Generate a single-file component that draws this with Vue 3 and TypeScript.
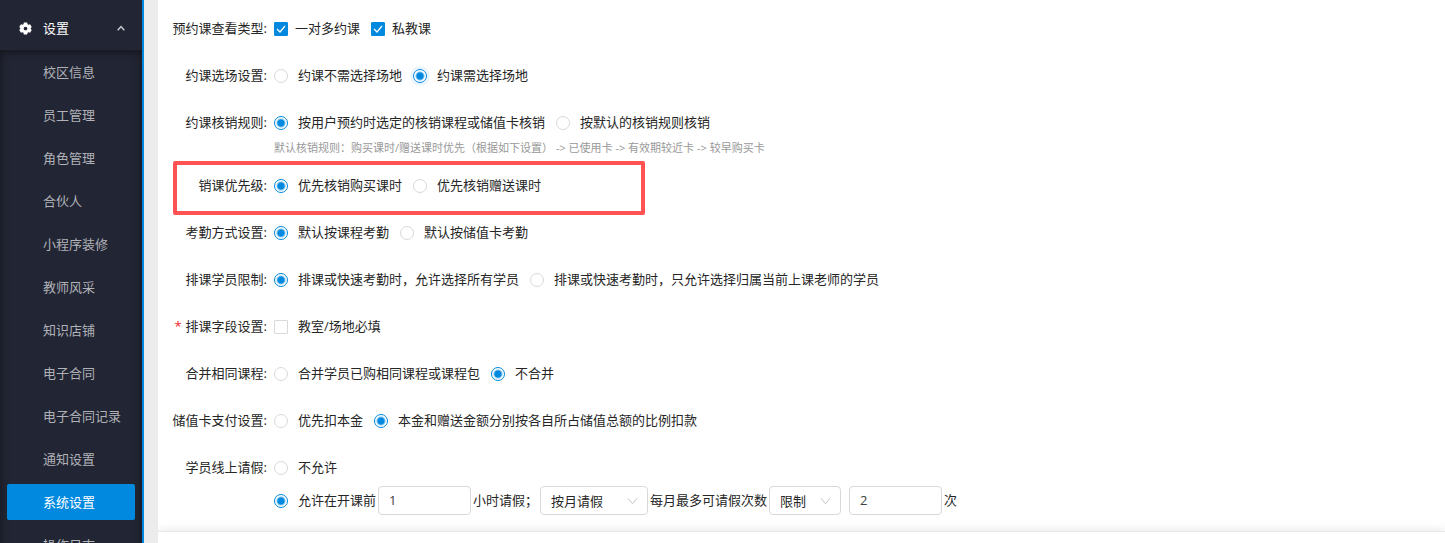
<script setup lang="ts">
import { onMounted, reactive, ref } from 'vue'

interface Option {
  value: string
  label: string
}

interface Row {
  key: string
  label: string
  type: 'radio' | 'checkbox'
  options: Option[]
  compact?: boolean
  required?: boolean
  hint?: string
  marked?: boolean
}

const menu: string[] = [
  '校区信息', '员工管理', '角色管理', '合伙人', '小程序装修', '教师风采',
  '知识店铺', '电子合同', '电子合同记录', '通知设置', '系统设置', '操作日志',
]
const current = ref('系统设置')
const expanded = ref(true)

const rows: Row[] = [
  {
    key: 'viewTypes', label: '预约课查看类型', type: 'checkbox', compact: true,
    options: [{ value: 'group', label: '一对多约课' }, { value: 'private', label: '私教课' }],
  },
  {
    key: 'venue', label: '约课选场设置', type: 'radio',
    options: [{ value: 'no', label: '约课不需选择场地' }, { value: 'yes', label: '约课需选择场地' }],
  },
  {
    key: 'rule', label: '约课核销规则', type: 'radio',
    options: [
      { value: 'user', label: '按用户预约时选定的核销课程或储值卡核销' },
      { value: 'default', label: '按默认的核销规则核销' },
    ],
    hint: '默认核销规则：购买课时/赠送课时优先（根据如下设置） -> 已使用卡 -> 有效期较近卡 -> 较早购买卡',
  },
  {
    key: 'priority', label: '销课优先级', type: 'radio', marked: true,
    options: [{ value: 'bought', label: '优先核销购买课时' }, { value: 'gift', label: '优先核销赠送课时' }],
  },
  {
    key: 'attendance', label: '考勤方式设置', type: 'radio',
    options: [{ value: 'course', label: '默认按课程考勤' }, { value: 'card', label: '默认按储值卡考勤' }],
  },
  {
    key: 'students', label: '排课学员限制', type: 'radio',
    options: [
      { value: 'all', label: '排课或快速考勤时，允许选择所有学员' },
      { value: 'own', label: '排课或快速考勤时，只允许选择归属当前上课老师的学员' },
    ],
  },
  {
    key: 'fields', label: '排课字段设置', type: 'checkbox', required: true,
    options: [{ value: 'room', label: '教室/场地必填' }],
  },
  {
    key: 'merge', label: '合并相同课程', type: 'radio',
    options: [{ value: 'yes', label: '合并学员已购相同课程或课程包' }, { value: 'no', label: '不合并' }],
  },
  {
    key: 'payment', label: '储值卡支付设置', type: 'radio',
    options: [
      { value: 'principal', label: '优先扣本金' },
      { value: 'ratio', label: '本金和赠送金额分别按各自所占储值总额的比例扣款' },
    ],
  },
]

const form = reactive<Record<string, string | string[]>>({
  viewTypes: ['group', 'private'],
  venue: 'yes',
  rule: 'user',
  priority: 'bought',
  attendance: 'course',
  students: 'all',
  fields: [],
  merge: 'no',
  payment: 'ratio',
})

const leave = reactive({ mode: 'allow', hours: '1', period: 'month', limit: 'limited', times: '2' })

onMounted(() => {
  document.getElementById('venue-yes')?.focus()
})
</script>

<template>
  <div class="shell">
    <nav class="sidebar" aria-label="设置">
      <button class="group" type="button" :aria-expanded="expanded" @click="expanded = !expanded">
        <svg class="gear" viewBox="0 0 14 14" aria-hidden="true">
          <path
            fill-rule="evenodd"
            d="M5.2 .6h3.6l.4 1.8 1 .6 1.7-.6 1.8 3.1L12.4 7l1.3 1.5-1.8 3.1-1.7-.6-1 .6-.4 1.8H5.2l-.4-1.8-1-.6-1.7.6L.3 8.5 1.6 7 .3 5.5l1.8-3.1 1.7.6 1-.6zM7 5a2 2 0 1 0 0 4 2 2 0 0 0 0-4z"
          />
        </svg>
        <span class="group-name">设置</span>
        <svg class="caret" viewBox="0 0 8 6" aria-hidden="true"><path d="M.7 5.2L4 1.6l3.3 3.6" /></svg>
      </button>
      <ul v-if="expanded" class="menu">
        <li v-for="item in menu" :key="item">
          <a
            href="#"
            :class="{ active: item === current }"
            :aria-current="item === current ? 'page' : undefined"
            @click.prevent="current = item"
          >{{ item }}</a>
        </li>
      </ul>
    </nav>

    <main class="page">
      <form class="form" @submit.prevent>
        <div v-for="row in rows" :key="row.key" class="row" :class="{ hinted: row.hint, marked: row.marked }">
          <div :id="`${row.key}-label`" class="label">
            <span v-if="row.required" class="star">*</span>{{ row.label }}:
          </div>
          <div class="control" :role="row.type === 'radio' ? 'radiogroup' : 'group'" :aria-labelledby="`${row.key}-label`">
            <div class="options">
              <label v-for="o in row.options" :key="o.value" class="option" :class="{ compact: row.compact }">
                <input
                  v-if="row.type === 'radio'"
                  :id="`${row.key}-${o.value}`"
                  v-model="form[row.key]"
                  class="radio"
                  type="radio"
                  :name="row.key"
                  :value="o.value"
                >
                <span v-else class="check">
                  <input v-model="form[row.key]" class="box" type="checkbox" :name="row.key" :value="o.value">
                  <svg class="tick" viewBox="0 0 14 14" aria-hidden="true"><path d="M3 7l3 3 5-6" /></svg>
                </span>
                <span>{{ o.label }}</span>
              </label>
            </div>
            <p v-if="row.hint" class="hint">{{ row.hint }}</p>
          </div>
        </div>

        <div class="row last">
          <div id="leave-label" class="label">学员线上请假:</div>
          <div class="control" role="radiogroup" aria-labelledby="leave-label">
            <div class="options">
              <label class="option">
                <input v-model="leave.mode" class="radio" type="radio" name="leave" value="deny">
                <span>不允许</span>
              </label>
            </div>
            <div class="options detail">
              <label class="option">
                <input v-model="leave.mode" class="radio" type="radio" name="leave" value="allow">
                <span>允许在开课前</span>
              </label>
              <input v-model="leave.hours" class="field" type="text" aria-label="允许在开课前小时数">
              <span>小时请假；</span>
              <span class="select period">
                <select v-model="leave.period" aria-label="请假周期">
                  <option value="month">按月请假</option>
                </select>
                <svg class="arrow" viewBox="0 0 12 8" aria-hidden="true"><path d="M1 1l5 6 5-6" /></svg>
              </span>
              <label for="limit">每月最多可请假次数</label>
              <span class="select limit">
                <select id="limit" v-model="leave.limit">
                  <option value="limited">限制</option>
                </select>
                <svg class="arrow" viewBox="0 0 12 8" aria-hidden="true"><path d="M1 1l5 6 5-6" /></svg>
              </span>
              <input v-model="leave.times" class="field times" type="text" aria-label="请假次数">
              <span>次</span>
            </div>
          </div>
        </div>
      </form>
      <footer class="footer"></footer>
    </main>
  </div>
</template>

<style>
body {
  margin: 0;
}
</style>

<style scoped>
.shell {
  display: flex;
  height: 100vh;
  overflow: hidden;
  background: #ececec;
  color: #262626;
  font-family: "Open Sans", "Noto Sans CJK SC", sans-serif;
  font-size: 13px;
}

.sidebar {
  display: flex;
  flex-direction: column;
  flex: none;
  width: 142px;
  border-right: 2px solid #0089df;
  background: #222533;
  overflow: hidden;
}

.group {
  display: flex;
  align-items: center;
  flex: none;
  height: 50px;
  padding: 6px 17px 0 19px;
  border: 0;
  background: none;
  color: #fff;
  font: inherit;
  text-align: left;
  line-height: 36px;
}

.gear {
  width: 13px;
  height: 13px;
  margin-right: 11px;
  fill: #fff;
}

.group-name {
  flex: 1;
}

.caret {
  width: 8px;
  height: 6px;
  fill: none;
  stroke: #c8cad0;
  stroke-width: 1.5;
}

.menu {
  flex: none;
  margin: 0;
  padding: 4px 7px;
  list-style: none;
  box-shadow: inset 0 2px 8px rgba(0, 0, 0, 0.45);
}

.menu a {
  display: block;
  margin-bottom: 7px;
  padding-left: 36px;
  border-radius: 2px;
  color: #b0b2b8;
  line-height: 36px;
  text-decoration: none;
}

.menu a.active {
  background: #0089df;
  color: #fff;
}

.page {
  display: flex;
  flex-direction: column;
  flex: 1;
  min-width: 0;
  margin-left: 14px;
  background: #fff;
  overflow: hidden;
}

.form {
  flex: none;
  padding-top: 14px;
}

.row {
  position: relative;
  display: flex;
  margin-bottom: 18px;
  line-height: 29px;
}

.row.hinted {
  margin-bottom: 12px;
}

.row.last {
  margin-bottom: 16px;
}

.row.marked::after {
  content: "";
  position: absolute;
  top: -10px;
  left: 15px;
  box-sizing: border-box;
  width: 472px;
  height: 54px;
  border: 4px solid #ff5252;
  border-radius: 2px;
  pointer-events: none;
}

.label {
  flex: none;
  width: 109px;
  margin-right: 7px;
  text-align: right;
  white-space: nowrap;
}

.star {
  margin-right: 4px;
  color: #f5222d;
}

.control {
  flex: 1;
  min-width: 0;
}

.options {
  display: flex;
  align-items: center;
  gap: 11px;
  white-space: nowrap;
}

.option {
  display: flex;
  align-items: center;
  gap: 10px;
}

.option.compact {
  gap: 7px;
}

.radio,
.box {
  display: block;
  flex: none;
  box-sizing: border-box;
  width: 14px;
  height: 14px;
  margin: 0;
  border: 1px solid #d9d9d9;
  background: #fff;
  appearance: none;
  outline: none;
}

.radio {
  border-radius: 50%;
}

.radio:checked {
  border-color: #0089df;
  background: radial-gradient(circle, #0089df 3px, #fff 5px);
}

.radio:focus {
  box-shadow: 0 0 0 3px rgba(0, 137, 223, 0.08);
}

.check {
  display: grid;
}

.check > * {
  grid-area: 1 / 1;
}

.box {
  border-radius: 1px;
}

.box:checked {
  border-color: #0089df;
  background: #0089df;
}

.tick {
  width: 14px;
  height: 14px;
  fill: none;
  stroke: #fff;
  stroke-width: 1.3;
  pointer-events: none;
}

.hint {
  margin: 0;
  color: #999;
  font-size: 11px;
  line-height: 22px;
}

.detail {
  gap: 2px;
  margin-top: 4px;
}

.field,
.select select {
  box-sizing: border-box;
  height: 29px;
  padding: 0 10px;
  border: 1px solid #d9d9d9;
  border-radius: 4px;
  background: #fff;
  color: #404040;
  font: inherit;
  outline: none;
}

.field {
  width: 93px;
}

.times {
  margin-left: 6px;
}

.select {
  display: grid;
  align-items: center;
}

.select > * {
  grid-area: 1 / 1;
}

.select select {
  width: 100%;
  appearance: none;
  color: #262626;
}

.period {
  width: 108px;
}

.limit {
  width: 72px;
}

.arrow {
  justify-self: end;
  width: 11px;
  height: 8px;
  margin-right: 10px;
  fill: none;
  stroke: #bfbfbf;
  pointer-events: none;
}

.footer {
  flex: 1;
  border-top: 1px solid #e8e8e8;
  background: #fff;
  box-shadow: 0 -2px 8px rgba(0, 0, 0, 0.08);
}
</style>
